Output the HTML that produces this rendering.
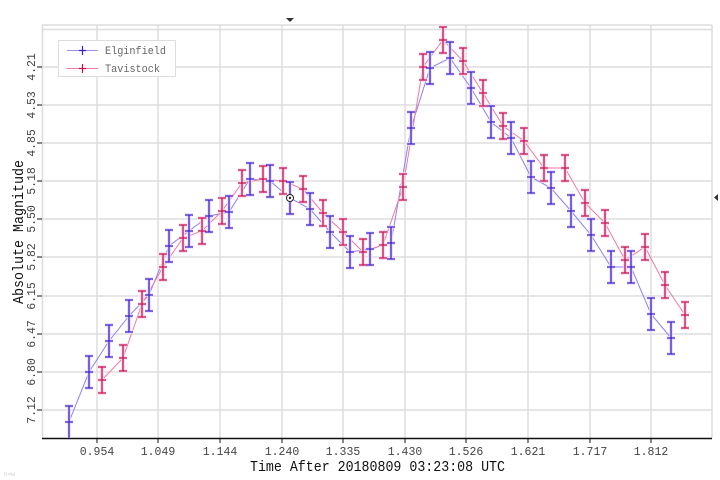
<!DOCTYPE html>
<html><head><meta charset="utf-8"><style>
html,body{margin:0;padding:0;background:#fff;width:720px;height:480px;overflow:hidden}
svg text{font-family:"Liberation Mono","DejaVu Sans Mono",monospace}
</style></head><body>
<svg width="720" height="480" viewBox="0 0 720 480" xmlns="http://www.w3.org/2000/svg">
<g stroke="#ddd" stroke-width="1.5" fill="none">
<path d="M42 25H712M42 29.5H712M42 67H712M42 105H712M42 143H712M42 181H712M42 219H712M42 257H712M42 296H712M42 334H712M42 372H712M42 410H712"/>
<path d="M42.5 25V438M97 25V438M158 25V438M220 25V438M282 25V438M343 25V438M405 25V438M466 25V438M528 25V438M590 25V438M651 25V438M712 25V438"/>
</g>
<path d="M42 438.5H712" stroke="#111" stroke-width="1.5"/>
<g stroke="#111" stroke-width="1"><path d="M97 438v5M158 438v5M220 438v5M282 438v5M343 438v5M405 438v5M466 438v5M528 438v5M590 438v5M651 438v5"/><path d="M37 67h5M37 105h5M37 143h5M37 181h5M37 219h5M37 257h5M37 296h5M37 334h5M37 372h5M37 410h5"/></g>
<g font-size="11.5" fill="#444" text-anchor="middle">
<text x="97" y="455">0.954</text><text x="158" y="455">1.049</text><text x="220" y="455">1.144</text><text x="282" y="455">1.240</text><text x="343" y="455">1.335</text><text x="405" y="455">1.430</text><text x="466" y="455">1.526</text><text x="528" y="455">1.621</text><text x="590" y="455">1.717</text><text x="651" y="455">1.812</text>
</g>
<g font-size="11.5" fill="#444" text-anchor="middle">
<text transform="translate(35 67) rotate(-90)">4.21</text><text transform="translate(35 105) rotate(-90)">4.53</text><text transform="translate(35 143) rotate(-90)">4.85</text><text transform="translate(35 181) rotate(-90)">5.18</text><text transform="translate(35 219) rotate(-90)">5.50</text><text transform="translate(35 257) rotate(-90)">5.82</text><text transform="translate(35 296) rotate(-90)">6.15</text><text transform="translate(35 334) rotate(-90)">6.47</text><text transform="translate(35 372) rotate(-90)">6.80</text><text transform="translate(35 410) rotate(-90)">7.12</text>
</g>
<text x="250" y="471" font-size="14.5" fill="#111" textLength="255" lengthAdjust="spacingAndGlyphs">Time After 20180809 03:23:08 UTC</text>
<text transform="translate(23 304) rotate(-90)" font-size="14.5" fill="#111" textLength="144" lengthAdjust="spacingAndGlyphs">Absolute Magnitude</text>
<text x="4" y="476" font-size="6" fill="#ccc">n=w</text>
<defs><clipPath id="c"><rect x="42" y="25" width="670" height="413"/></clipPath></defs>
<g clip-path="url(#c)" fill="none">
<polyline stroke="#8c82f0" stroke-width="1" points="69,422 89,372 109,341 129,316 149,295 169,246 189,231 209,216 229,212 250,179 270,181 290,198 310,209 330,232 350,252 370,249 391,243 411,128 430,68 450,58 471,88 491,122 511,138 531,177 551,188 571,211 591,235 611,267 631,267 651,314 671,338"/>
<polyline stroke="#f07aa0" stroke-width="1" points="102,380 123,358 142,304 163,267 183,238 202,231 222,211 242,183 263,179 283,181 303,189 323,213 343,232 363,252 383,245 403,187 423,67 443,40 463,61 483,93 503,126 524,141 544,168 565,168 585,203 605,223 625,260 645,247 665,285 685,315"/>
<path d="M69 406V438M65 406h8M65 422h8M89 356V388M85 356h8M85 388h8M85 372h8M109 325V357M105 325h8M105 357h8M105 341h8M129 300V332M125 300h8M125 332h8M125 316h8M149 279V311M145 279h8M145 311h8M145 295h8M169 230V262M165 230h8M165 262h8M165 246h8M189 215V247M185 215h8M185 247h8M185 231h8M209 200V232M205 200h8M205 232h8M205 216h8M229 196V228M225 196h8M225 228h8M225 212h8M250 163V195M246 163h8M246 195h8M246 179h8M270 165V197M266 165h8M266 197h8M266 181h8M290 182V214M286 182h8M286 214h8M310 193V225M306 193h8M306 225h8M306 209h8M330 216V248M326 216h8M326 248h8M326 232h8M350 236V268M346 236h8M346 268h8M346 252h8M370 233V265M366 233h8M366 265h8M366 249h8M391 227V259M387 227h8M387 259h8M387 243h8M411 112V144M407 112h8M407 144h8M407 128h8M430 52V84M426 52h8M426 84h8M426 68h8M450 42V74M446 42h8M446 74h8M446 58h8M471 72V104M467 72h8M467 104h8M467 88h8M491 106V138M487 106h8M487 138h8M487 122h8M511 122V154M507 122h8M507 154h8M507 138h8M531 161V193M527 161h8M527 193h8M527 177h8M551 172V204M547 172h8M547 204h8M547 188h8M571 195V227M567 195h8M567 227h8M567 211h8M591 219V251M587 219h8M587 251h8M587 235h8M611 251V283M607 251h8M607 283h8M607 267h8M631 251V283M627 251h8M627 283h8M627 267h8M651 298V330M647 298h8M647 330h8M647 314h8M671 322V354M667 322h8M667 354h8M667 338h8" stroke="#eadcff" stroke-width="3.5"/>
<path d="M102 367V393M98 367h8M98 393h8M98 380h8M123 345V371M119 345h8M119 371h8M119 358h8M142 291V317M138 291h8M138 317h8M138 304h8M163 254V280M159 254h8M159 280h8M159 267h8M183 225V251M179 225h8M179 251h8M179 238h8M202 218V244M198 218h8M198 244h8M198 231h8M222 198V224M218 198h8M218 224h8M218 211h8M242 170V196M238 170h8M238 196h8M238 183h8M263 166V192M259 166h8M259 192h8M259 179h8M283 168V194M279 168h8M279 194h8M279 181h8M303 176V202M299 176h8M299 202h8M299 189h8M323 200V226M319 200h8M319 226h8M319 213h8M343 219V245M339 219h8M339 245h8M339 232h8M363 239V265M359 239h8M359 265h8M359 252h8M383 232V258M379 232h8M379 258h8M379 245h8M403 174V200M399 174h8M399 200h8M399 187h8M423 54V80M419 54h8M419 80h8M419 67h8M443 27V53M439 27h8M439 53h8M439 40h8M463 48V74M459 48h8M459 74h8M459 61h8M483 80V106M479 80h8M479 106h8M479 93h8M503 113V139M499 113h8M499 139h8M499 126h8M524 128V154M520 128h8M520 154h8M520 141h8M544 155V181M540 155h8M540 181h8M540 168h8M565 155V181M561 155h8M561 181h8M561 168h8M585 190V216M581 190h8M581 216h8M581 203h8M605 210V236M601 210h8M601 236h8M601 223h8M625 247V273M621 247h8M621 273h8M621 260h8M645 234V260M641 234h8M641 260h8M641 247h8M665 272V298M661 272h8M661 298h8M661 285h8M685 302V328M681 302h8M681 328h8M681 315h8" stroke="#fbd6ec" stroke-width="3.5"/>
<path d="M69 406V438M65 406h8M65 422h8M89 356V388M85 356h8M85 388h8M85 372h8M109 325V357M105 325h8M105 357h8M105 341h8M129 300V332M125 300h8M125 332h8M125 316h8M149 279V311M145 279h8M145 311h8M145 295h8M169 230V262M165 230h8M165 262h8M165 246h8M189 215V247M185 215h8M185 247h8M185 231h8M209 200V232M205 200h8M205 232h8M205 216h8M229 196V228M225 196h8M225 228h8M225 212h8M250 163V195M246 163h8M246 195h8M246 179h8M270 165V197M266 165h8M266 197h8M266 181h8M290 182V214M286 182h8M286 214h8M310 193V225M306 193h8M306 225h8M306 209h8M330 216V248M326 216h8M326 248h8M326 232h8M350 236V268M346 236h8M346 268h8M346 252h8M370 233V265M366 233h8M366 265h8M366 249h8M391 227V259M387 227h8M387 259h8M387 243h8M411 112V144M407 112h8M407 144h8M407 128h8M430 52V84M426 52h8M426 84h8M426 68h8M450 42V74M446 42h8M446 74h8M446 58h8M471 72V104M467 72h8M467 104h8M467 88h8M491 106V138M487 106h8M487 138h8M487 122h8M511 122V154M507 122h8M507 154h8M507 138h8M531 161V193M527 161h8M527 193h8M527 177h8M551 172V204M547 172h8M547 204h8M547 188h8M571 195V227M567 195h8M567 227h8M567 211h8M591 219V251M587 219h8M587 251h8M587 235h8M611 251V283M607 251h8M607 283h8M607 267h8M631 251V283M627 251h8M627 283h8M627 267h8M651 298V330M647 298h8M647 330h8M647 314h8M671 322V354M667 322h8M667 354h8M667 338h8" stroke="#3b1fcf" stroke-width="1.3"/>
<path d="M102 367V393M98 367h8M98 393h8M98 380h8M123 345V371M119 345h8M119 371h8M119 358h8M142 291V317M138 291h8M138 317h8M138 304h8M163 254V280M159 254h8M159 280h8M159 267h8M183 225V251M179 225h8M179 251h8M179 238h8M202 218V244M198 218h8M198 244h8M198 231h8M222 198V224M218 198h8M218 224h8M218 211h8M242 170V196M238 170h8M238 196h8M238 183h8M263 166V192M259 166h8M259 192h8M259 179h8M283 168V194M279 168h8M279 194h8M279 181h8M303 176V202M299 176h8M299 202h8M299 189h8M323 200V226M319 200h8M319 226h8M319 213h8M343 219V245M339 219h8M339 245h8M339 232h8M363 239V265M359 239h8M359 265h8M359 252h8M383 232V258M379 232h8M379 258h8M379 245h8M403 174V200M399 174h8M399 200h8M399 187h8M423 54V80M419 54h8M419 80h8M419 67h8M443 27V53M439 27h8M439 53h8M439 40h8M463 48V74M459 48h8M459 74h8M459 61h8M483 80V106M479 80h8M479 106h8M479 93h8M503 113V139M499 113h8M499 139h8M499 126h8M524 128V154M520 128h8M520 154h8M520 141h8M544 155V181M540 155h8M540 181h8M540 168h8M565 155V181M561 155h8M561 181h8M561 168h8M585 190V216M581 190h8M581 216h8M581 203h8M605 210V236M601 210h8M601 236h8M601 223h8M625 247V273M621 247h8M621 273h8M621 260h8M645 234V260M641 234h8M641 260h8M641 247h8M665 272V298M661 272h8M661 298h8M661 285h8M685 302V328M681 302h8M681 328h8M681 315h8" stroke="#c8104e" stroke-width="1.3"/>
<circle cx="290" cy="198" r="3.5" fill="#fff" stroke="#222" stroke-width="1"/>
<circle cx="290" cy="198" r="1.2" fill="#222"/>
</g>
<rect x="58.5" y="40.5" width="117" height="36" fill="#fff" stroke="#ddd"/>
<path d="M67 50.5H98" stroke="#9a90f0"/><path d="M82.5 46V55M79 50.5h7" stroke="#3b1fcf" stroke-width="1.2"/>
<path d="M67 68.5H98" stroke="#f07aa0"/><path d="M82.5 64V73M79 68.5h7" stroke="#c8104e" stroke-width="1.2"/>
<g font-size="11" fill="#666"><text x="105" y="54" textLength="61" lengthAdjust="spacingAndGlyphs">Elginfield</text><text x="105" y="72" textLength="55" lengthAdjust="spacingAndGlyphs">Tavistock</text></g>
<path d="M286 18h8l-4 4z" fill="#333"/>
<path d="M718 194v7l-4-3.5z" fill="#333"/>
</svg>
</body></html>
